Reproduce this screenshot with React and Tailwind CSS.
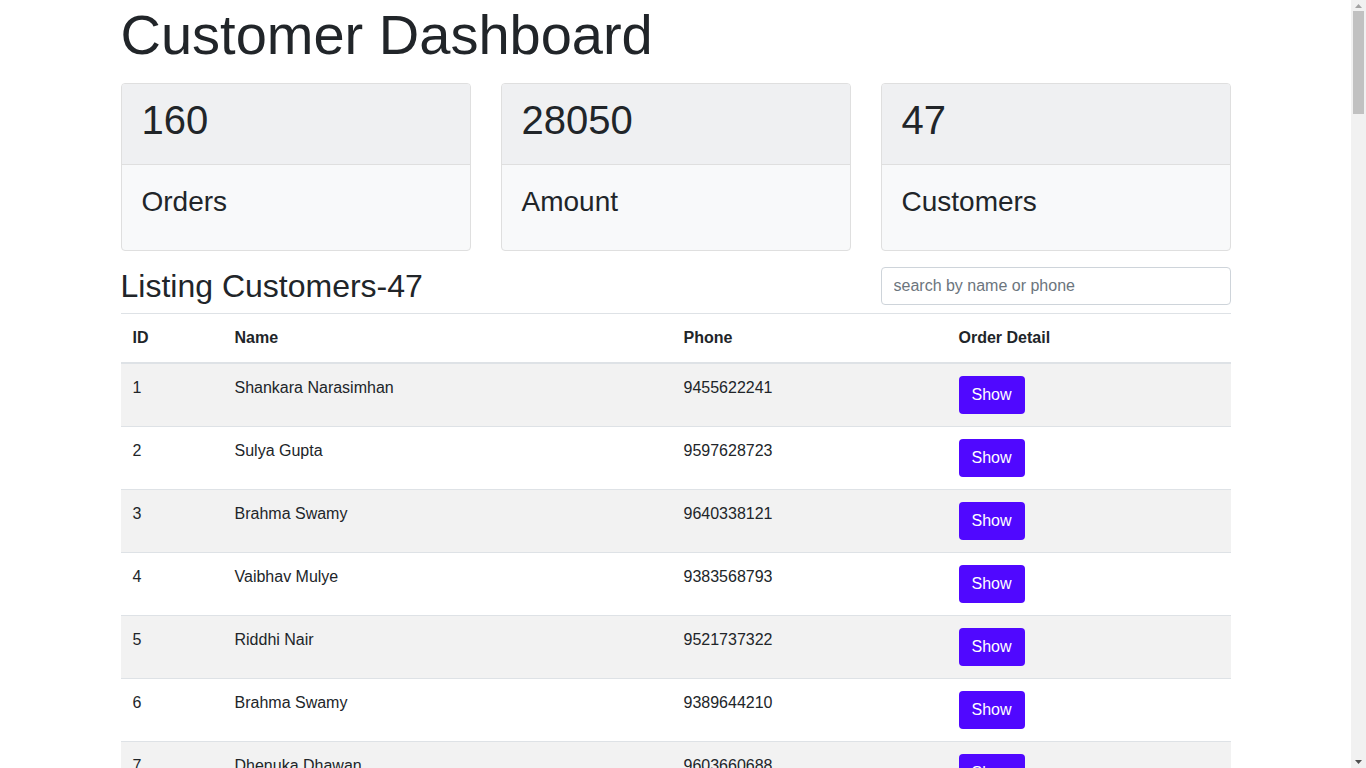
import React, { useState } from 'react';

const customers = [
  [1, "Shankara Narasimhan", "9455622241"],
  [2, "Sulya Gupta", "9597628723"],
  [3, "Brahma Swamy", "9640338121"],
  [4, "Vaibhav Mulye", "9383568793"],
  [5, "Riddhi Nair", "9521737322"],
  [6, "Brahma Swamy", "9389644210"],
  [7, "Dhenuka Dhawan", "9603660688"],
  [8, "Ishaan Kapoor", "9412276350"],
  [9, "Meera Iyer", "9587123409"],
];

const StatCard = ({ value, label }) => (
  <div className="w-[350px] border border-[#dfdfdf] rounded bg-[#f8f9fa] overflow-hidden">
    <div className="bg-[#eff0f2] border-b border-[#dfdfdf] px-5 pt-3 pb-5 h-[81px]">
      <h1 className="text-[40px] leading-[48px]">{value}</h1>
    </div>
    <div className="px-5 pt-5 h-[85px]">
      <h3 className="text-[28px] leading-[34px]">{label}</h3>
    </div>
  </div>
);

// page scrollbar as it shows in the screenshot
const Scrollbar = () => (
  <div className="w-[15px] h-screen bg-[#f1f1f1] flex flex-col items-center shrink-0">
    <svg width="9" height="10" viewBox="0 0 9 10" className="mt-[1px]">
      <path d="M1 7 L4.5 3 L8 7 Z" fill="#a3a3a3" />
    </svg>
    <div className="w-[11px] h-[103px] bg-[#c1c1c1]" />
    <div className="flex-1" />
    <svg width="9" height="10" viewBox="0 0 9 10" className="mb-[1px]">
      <path d="M1 3 L8 3 L4.5 7 Z" fill="#505050" />
    </svg>
  </div>
);

export default function App() {
  const [search, setSearch] = useState("");

  const rows = customers.filter(c =>
    c[1].toLowerCase().includes(search.toLowerCase()) || c[2].includes(search)
  );

  return (
    <div className="h-screen flex overflow-hidden bg-white text-[#212529] font-['Liberation_Sans',Arial,sans-serif]">
      <div className="flex-1 overflow-hidden">
        <div className="w-[1140px] mx-auto px-[15px]">
          <h1 className="text-[56px] leading-[62px] pt-[4px] mb-[17px]">Customer Dashboard</h1>

          <div className="flex gap-[30px]">
            <StatCard value="160" label="Orders" />
            <StatCard value="28050" label="Amount" />
            <StatCard value="47" label="Customers" />
          </div>

          <div className="flex justify-between items-center mt-[16px] mb-2">
            <h2 className="text-[32px] leading-[38px]">Listing Customers-47</h2>
            <input
              type="text"
              placeholder="search by name or phone"
              value={search}
              onChange={e => setSearch(e.target.value)}
              className="w-[350px] h-[38px] border border-[#ced4da] rounded px-3 text-base placeholder:text-[#6c757d] outline-none"
            />
          </div>

          <table className="w-full text-base border-collapse">
            <thead>
              <tr className="border-t border-[#dee2e6] border-b-2">
                <th className="w-[102px] p-3 text-left font-bold leading-6">ID</th>
                <th className="w-[449px] p-3 text-left font-bold leading-6">Name</th>
                <th className="w-[275px] p-3 text-left font-bold leading-6">Phone</th>
                <th className="p-3 text-left font-bold leading-6">Order Detail</th>
              </tr>
            </thead>
            <tbody>
              {rows.map((c, i) => (
                <tr key={c[0]} className={`border-t border-[#dee2e6] ${i % 2 === 0 ? "bg-[#f2f2f2]" : ""}`}>
                  <td className="p-3 align-top leading-6">{c[0]}</td>
                  <td className="p-3 align-top leading-6">{c[1]}</td>
                  <td className="p-3 align-top leading-6">{c[2]}</td>
                  <td className="p-3 align-top leading-6">
                    <button className="bg-[#5008ff] text-white rounded px-[13px] h-[38px] leading-6">Show</button>
                  </td>
                </tr>
              ))}
            </tbody>
          </table>
        </div>
      </div>
      <Scrollbar />
    </div>
  );
}
